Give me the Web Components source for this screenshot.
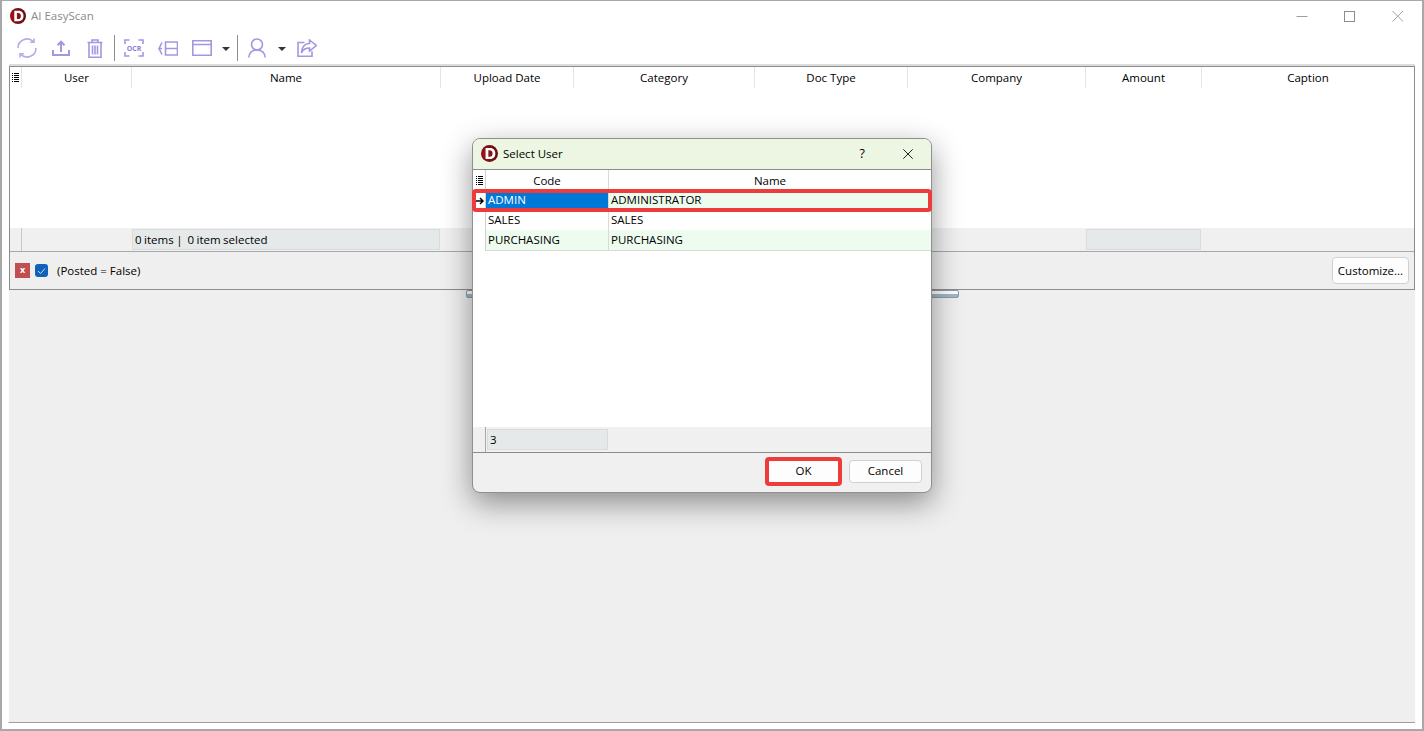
<!DOCTYPE html>
<html>
<head>
<meta charset="utf-8">
<title>AI EasyScan</title>
<style>
    html, body {
        height: 100%;
        margin: 0;
        overflow: hidden;
    }

    body {
        background-color: #fff;
        color: #000;
        font-family: "Open Sans", "Noto Sans", sans-serif;
        font-size: 11.5px;
    }
</style>
</head>
<body>
<app-window title="AI EasyScan">
    <tool-bar slot="toolbar"></tool-bar>
    <doc-grid slot="main"></doc-grid>
    <select-user slot="dialog"></select-user>
</app-window>

<script>
const logoSvg = (size) => `
    <svg width="${size}" height="${size}" viewBox="0 0 16 16">
        <defs>
            <radialGradient id="logo-red" cx=".3" cy=".5" r=".8">
                <stop offset="0" stop-color="#a8141c"/>
                <stop offset="1" stop-color="#5a0a0f"/>
            </radialGradient>
        </defs>
        <circle cx="8" cy="8" r="8" fill="url(#logo-red)"/>
        <path d="M4.300 2.800h4.200c3.300 0 5 2.200 5 5.200s-1.700 5.200-5 5.200H4.300z M6.900 4.900v6.200h1.300c1.800 0 2.700-1.200 2.700-3.100s-.9-3.100-2.700-3.100z" fill="#fff" fill-rule="evenodd"/>
    </svg>`;

const menuSvg = `
    <svg width="7" height="9" viewBox="0 0 7 9"><path d="M0 .5h1M0 2.500h1M0 4.500h1M0 6.500h1M0 8.500h1M2 .5h5M2 2.500h5M2 4.500h5M2 6.500h5M2 8.500h5" stroke="#000" fill="none"/></svg>`;

let appWindowTemplate = document.createElement('template');
appWindowTemplate.innerHTML = `
    <style>
    :host {
        border: 2px solid #a8a8a8;
        border-top-width: 1px;
        box-sizing: border-box;
        display: flex;
        flex-direction: column;
        height: 731px;
        position: relative;
        width: 1424px;
    }

    .title {
        align-items: center;
        box-sizing: border-box;
        color: #8a8a8a;
        display: flex;
        flex: none;
        gap: 5px;
        height: 30px;
        padding-bottom: 1px;
        padding-left: 8px;
    }

    .title svg { flex: none; }

    .caption-buttons {
        display: flex;
        margin-left: auto;
        margin-top: 1px;
    }

    .caption-buttons svg {
        display: block;
        margin: 0 16px;
    }

    .tools { flex: none; height: 35px; }

    .main {
        display: flex;
        flex: 1;
        flex-direction: column;
        min-height: 0;
        padding: 0 7px 6px 7px;
    }
    </style>
    <div class="title">
        ${logoSvg(16)}
        <span id="title"></span>
        <div class="caption-buttons">
            <svg width="16" height="16" viewBox="0 0 16 16"><path d="M2.500 8.500h11" stroke="#a0a0a0" fill="none"/></svg>
            <svg width="16" height="16" viewBox="0 0 16 16"><rect x="2.500" y="3.500" width="10" height="10" stroke="#8c8c8c" fill="none"/></svg>
            <svg width="16" height="16" viewBox="0 0 16 16"><path d="M2.500 3l10.500 10.500M13 3L2.500 13.500" stroke="#a0a0a0" fill="none"/></svg>
        </div>
    </div>
    <div class="tools"><slot name="toolbar"></slot></div>
    <div class="main"><slot name="main"></slot></div>
    <slot name="dialog"></slot>
`;

class AppWindow extends HTMLElement {
    constructor() {
        super();
        this.attachShadow({ mode: 'open' });
        this.shadowRoot.append(appWindowTemplate.content.cloneNode(true));
        this.shadowRoot.querySelector('#title').textContent = this.getAttribute('title');
    }
}

let toolBarTemplate = document.createElement('template');
toolBarTemplate.innerHTML = `
    <style>
    :host {
        align-items: center;
        box-sizing: border-box;
        display: flex;
        height: 35px;
        padding-bottom: 1px;
        padding-left: 15px;
    }

    svg { display: block; flex: none; }

    svg * {
        fill: none;
        stroke: #a497e2;
        stroke-width: 1.6;
    }

    .sep {
        background-color: #8c8c8c;
        flex: none;
        height: 26px;
        width: 1px;
    }

    .caret {
        border-left: 4px solid transparent;
        border-right: 4px solid transparent;
        border-top: 4px solid #333;
        flex: none;
        height: 0;
        margin-top: 1px;
        width: 0;
    }
    </style>
    <svg width="20" height="20" viewBox="0 0 20 20" style="margin-right:15px">
        <path d="M1 10a9 9 0 0 1 15.300-6.400M19 10a9 9 0 0 1-15.300 6.400" style="stroke:#b5abe8"/>
        <path d="M17 .5v3.800h-3.800M3 19.500v-3.800h3.800" style="stroke:#b5abe8"/>
    </svg>
    <svg width="18" height="16" viewBox="0 0 18 16" style="margin-right:17px">
        <path d="M9 12V2M5.500 5.200L9 1.700l3.500 3.500M1 10v5h16v-5" style="stroke-width:2"/>
    </svg>
    <svg width="16" height="19" viewBox="0 0 16 19" style="margin-right:11px">
        <path d="M.5 3.500h15M5 3.500V1h6v2.500M2 3.500v14.700h12V3.500M5.500 6.500v9M8 6.500v9M10.500 6.500v9"/>
    </svg>
    <div class="sep" style="margin-right:9px"></div>
    <svg width="20" height="18" viewBox="0 0 20 18" style="margin-right:14px">
        <path d="M1 5V1h4.500M14.500 1H19v4M19 13v4h-4.500M5.500 17H1v-4"/>
        <text x="10" y="11.500" text-anchor="middle" font-family="Open Sans" font-weight="700" font-size="7" style="fill:#8d80d8;stroke:none">OCR</text>
    </svg>
    <svg width="20" height="15" viewBox="0 0 20 15" style="margin-right:14px">
        <path d="M4 1.500L1 7.500h3M1 7.500l3 6M7.500 1H19.500V7.500H7.500zM7.500 7.500H19.500V14H7.500z"/>
    </svg>
    <svg width="20" height="16" viewBox="0 0 20 16" style="margin-right:10px">
        <path d="M.8.8h18.400v14.400H.8zM.8 4.500h18.400"/>
    </svg>
    <div class="caret" style="margin-right:7px"></div>
    <div class="sep" style="margin-right:10px"></div>
    <svg width="18" height="20" viewBox="0 0 18 20" style="margin-right:12px">
        <circle cx="9" cy="6.500" r="5.500"/>
        <path d="M.8 19.500c.5-4.800 3.700-7.500 8.200-7.500s7.700 2.700 8.200 7.500"/>
    </svg>
    <div class="caret" style="margin-right:11px"></div>
    <svg width="20" height="18" viewBox="0 0 20 18">
        <path d="M7.500 3.500H1v13.700h14v-5"/>
        <path d="M12.500 1l6.800 5.500-6.800 5.500V9C8.500 9 5.800 10.800 4.500 14c0-5.500 3-9.500 8-9.500z"/>
    </svg>
`;

class ToolBar extends HTMLElement {
    constructor() {
        super();
        this.attachShadow({ mode: 'open' });
        this.shadowRoot.append(toolBarTemplate.content.cloneNode(true));
    }
}

let docGridTemplate = document.createElement('template');
docGridTemplate.innerHTML = `
    <style>
    :host {
        display: flex;
        flex: 1;
        flex-direction: column;
        min-height: 0;
    }

    .box {
        border: 1px solid #8c8c8c;
        box-shadow: 0 -2px 0 #dcdcdc;
        box-sizing: border-box;
        display: flex;
        flex: none;
        flex-direction: column;
        height: 224px;
    }

    .row {
        display: grid;
        grid-template-columns: 12px 110px 309px 133px 181px 153px 178px 116px 1fr;
    }

    .head {
        flex: none;
        height: 21px;
        line-height: 21px;
        text-align: center;
    }

    .head > div { border-right: 1px solid #e4e4e4; box-sizing: border-box; }
    .head > div:last-child { border-right: 0; }

    .menu {
        align-items: center;
        display: flex;
        height: 21px;
        justify-content: center;
    }

    .body { flex: 1; min-height: 0; }

    .foot {
        background-color: #f0f0f0;
        border-bottom: 1px solid #a8a8a8;
        box-sizing: border-box;
        flex: none;
        height: 24px;
    }

    .foot > div { box-sizing: border-box; padding-top: 1px; }
    .foot > .first { border-right: 1px solid #c8c8c8; }

    .sum {
        background-color: #e6e9e9;
        border: 1px solid #d8dcdc;
        box-sizing: border-box;
        height: 21px;
        line-height: 19px;
        margin-right: 1px;
        padding-left: 2px;
        word-spacing: -.5px;
    }

    .filter {
        align-items: center;
        background-color: #efefef;
        display: flex;
        flex: none;
        height: 37px;
        padding: 0 5px;
    }

    .x {
        background-color: #c24f50;
        color: #fff;
        font-size: 9px;
        font-weight: 700;
        height: 15px;
        line-height: 13px;
        text-align: center;
        width: 15px;
    }

    .check {
        align-items: center;
        background-color: #0f62b8;
        border-radius: 3px;
        display: flex;
        height: 13px;
        justify-content: center;
        margin-left: 5px;
        width: 13px;
    }

    .filter span { margin-left: 9px; }

    button {
        background-color: #fdfdfd;
        border: 1px solid #d0d0d0;
        border-radius: 4px;
        font: inherit;
        height: 27px;
        margin-left: auto;
        padding: 0;
        width: 77px;
    }

    .lower {
        background-color: #efefef;
        border-bottom: 1px solid #a0a0a0;
        border-left: 1px solid #fff;
        flex: 1;
        margin-left: -1px;
        position: relative;
    }

    .splitter {
        background: linear-gradient(#fff 55%, #9db8c8 55%);
        border: 1px solid #8f9aa5;
        border-radius: 2px;
        box-sizing: border-box;
        height: 8px;
        left: 457px;
        position: absolute;
        top: 0;
        width: 493px;
    }
    </style>
    <div class="box">
        <div class="row head">
            <div class="menu">${menuSvg}</div>
            <div>User</div><div>Name</div><div>Upload Date</div><div>Category</div><div>Doc Type</div><div>Company</div><div>Amount</div><div>Caption</div>
        </div>
        <div class="body"></div>
        <div class="row foot">
            <div class="first"></div><div></div>
            <div><div class="sum">0 items |&nbsp;&nbsp;0 item selected</div></div>
            <div></div><div></div><div></div><div></div>
            <div><div class="sum"></div></div>
            <div></div>
        </div>
        <div class="filter">
            <div class="x">x</div>
            <div class="check"><svg width="9" height="8" viewBox="0 0 9 8"><path d="M1 4l2.500 2.500L8 1.500" stroke="#cfe0f4" fill="none"/></svg></div>
            <span>(Posted = False)</span>
            <button>Customize...</button>
        </div>
    </div>
    <div class="lower"><div class="splitter"></div></div>
`;

class DocGrid extends HTMLElement {
    constructor() {
        super();
        this.attachShadow({ mode: 'open' });
        this.shadowRoot.append(docGridTemplate.content.cloneNode(true));
    }
}

let selectUserTemplate = document.createElement('template');
selectUserTemplate.innerHTML = `
    <style>
    :host {
        background-color: #f0f0f0;
        border: 1px solid #8f8f8f;
        border-radius: 8px;
        box-shadow: 0 10px 30px rgba(0, 0, 0, .42);
        box-sizing: border-box;
        display: flex;
        flex-direction: column;
        height: 355px;
        left: 470px;
        position: absolute;
        top: 137px;
        width: 460px;
    }

    .title {
        align-items: center;
        background-color: #ecf6e3;
        border-radius: 7px 7px 0 0;
        box-sizing: border-box;
        display: flex;
        flex: none;
        gap: 5px;
        height: 30px;
        padding-bottom: 1px;
        padding-left: 8px;
    }

    .title svg { flex: none; }

    .help { font-size: 12.5px; margin-left: auto; margin-right: 33px; }
    .close { margin-right: 18px; }

    .grid {
        background-color: #fff;
        border-bottom: 1px solid #8c8c8c;
        border-top: 1px solid #8c8c8c;
        box-sizing: border-box;
        display: flex;
        flex: none;
        flex-direction: column;
        height: 284px;
    }

    .row {
        display: grid;
        flex: none;
        grid-template-columns: 13px 123px 1fr;
        height: 20px;
        line-height: 20px;
    }

    .row > div {
        border-bottom: 1px solid #d9d9d9;
        border-right: 1px solid #d9d9d9;
        box-sizing: border-box;
        padding-left: 2px;
    }

    .row > div:last-child { border-right: 0; }

    .row > .ind {
        align-items: center;
        border-bottom: 0;
        border-right: 1px solid #d0d0d0;
        display: flex;
        justify-content: center;
        padding: 0;
    }

    .head { line-height: 21px; text-align: center; }
    .head > div { border-bottom: 0; padding: 0; }
    .alt > div:not(.ind) { background-color: #eefcef; }
    .row.alt > .sel { background-color: #0078d7; color: #fff; }

    .spacer { flex: 1; }

    .foot {
        background-color: #f0f0f0;
        display: flex;
        flex: none;
        height: 25px;
    }

    .foot .ind { border-right: 1px solid #a8a8a8; box-sizing: border-box; flex: none; width: 13px; }

    .count {
        background-color: #e6e9e9;
        border: 1px solid #d8dcdc;
        box-sizing: border-box;
        height: 21px;
        line-height: 19px;
        margin: 2px 0 0 1px;
        padding-left: 2px;
        width: 121px;
    }

    .actions {
        align-items: center;
        display: flex;
        flex: 1;
        gap: 9px;
        justify-content: flex-end;
        padding-bottom: 2px;
        padding-right: 9px;
    }

    button {
        background-color: #fdfdfd;
        border: 1px solid #d0d0d0;
        border-radius: 4px;
        font: inherit;
        height: 23px;
        padding: 0 0 2px;
        width: 73px;
    }

    .mark {
        border: 4px solid #ee3c3c;
        border-radius: 4px;
        box-sizing: border-box;
        pointer-events: none;
        position: absolute;
    }
    </style>
    <div class="title">
        ${logoSvg(17)}
        <span>Select User</span>
        <span class="help">?</span>
        <svg class="close" width="10" height="10" viewBox="0 0 10 10"><path d="M.3.3l9.400 9.400M9.700.3L.3 9.700" stroke="#222" fill="none"/></svg>
    </div>
    <div class="grid">
        <div class="row head">
            <div class="ind">${menuSvg}</div>
            <div>Code</div><div>Name</div>
        </div>
        <div class="row alt">
            <div class="ind"><svg width="9" height="8" viewBox="0 0 9 8"><path d="M0 4h7M5 1l3 3-3 3" stroke="#000" stroke-width="1.500" fill="none"/></svg></div>
            <div class="sel">ADMIN</div><div>ADMINISTRATOR</div>
        </div>
        <div class="row">
            <div class="ind"></div><div>SALES</div><div>SALES</div>
        </div>
        <div class="row alt">
            <div class="ind"></div><div>PURCHASING</div><div>PURCHASING</div>
        </div>
        <div class="spacer"></div>
        <div class="foot">
            <div class="ind"></div>
            <div class="count">3</div>
        </div>
    </div>
    <div class="actions">
        <button>OK</button>
        <button>Cancel</button>
    </div>
    <div class="mark" style="left:-1px;top:50px;width:460px;height:23px"></div>
    <div class="mark" style="left:292px;top:318px;width:77px;height:29px"></div>
`;

class SelectUser extends HTMLElement {
    constructor() {
        super();
        this.attachShadow({ mode: 'open' });
        this.shadowRoot.append(selectUserTemplate.content.cloneNode(true));
    }
}

window.customElements.define('app-window', AppWindow);
window.customElements.define('tool-bar', ToolBar);
window.customElements.define('doc-grid', DocGrid);
window.customElements.define('select-user', SelectUser);
</script>
</body>
</html>
